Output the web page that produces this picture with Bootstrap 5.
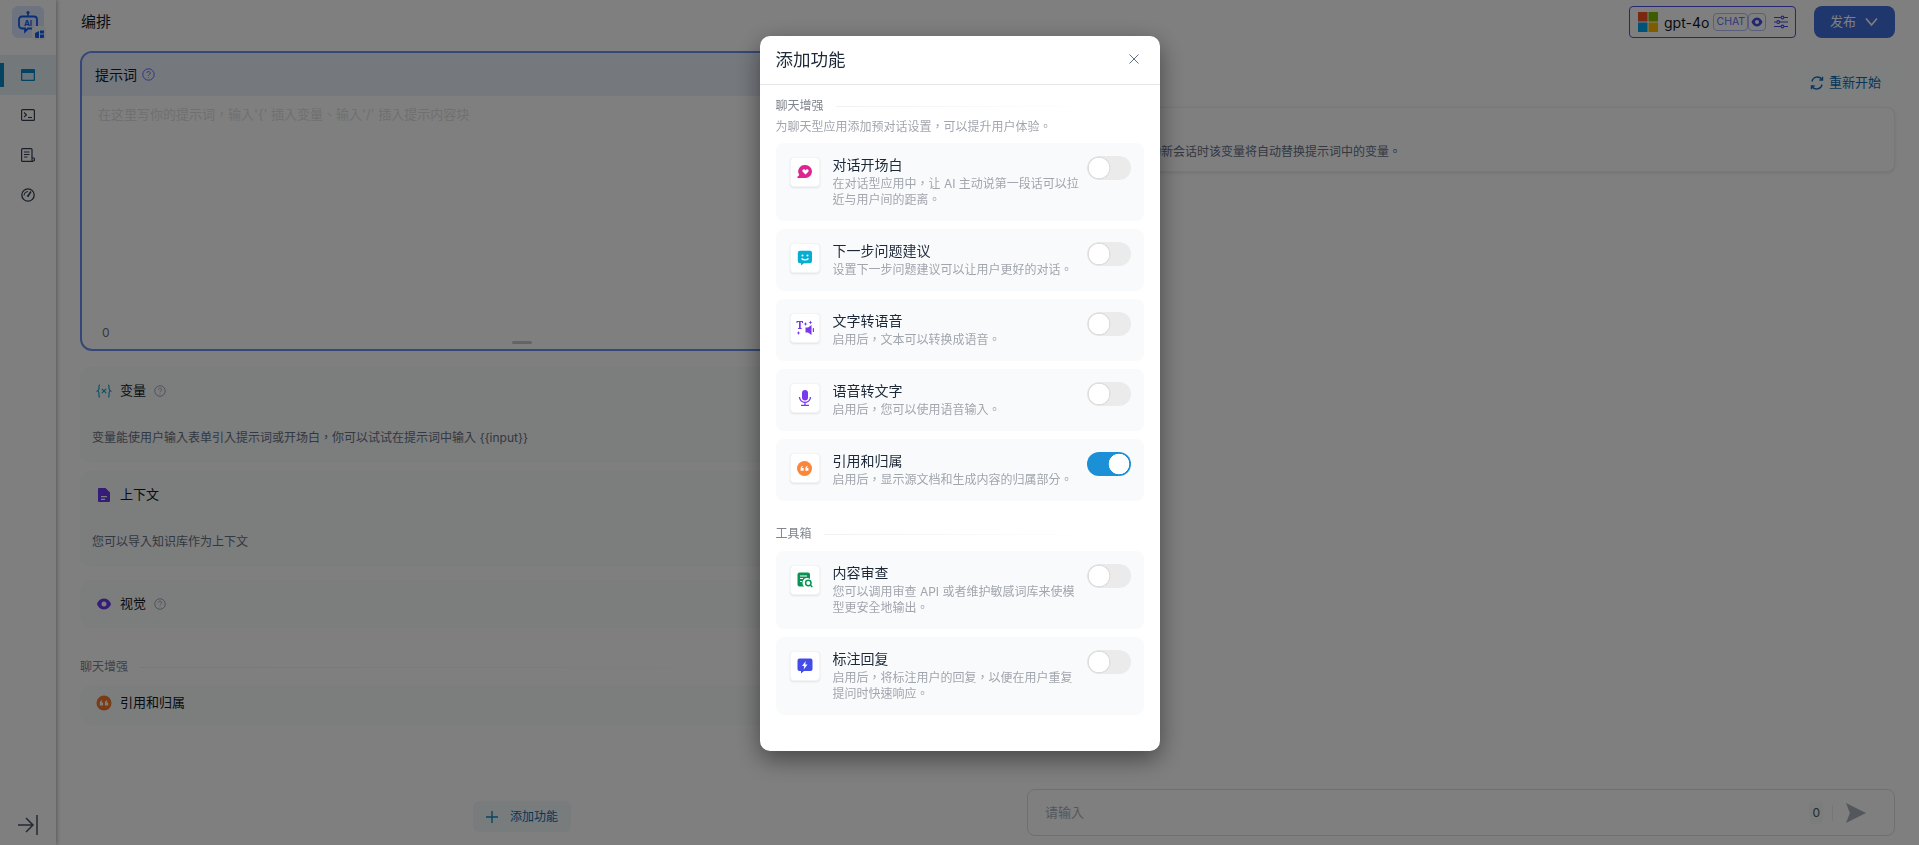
<!DOCTYPE html>
<html lang="zh-TW">
<head>
<meta charset="UTF-8">
<title>编排</title>
<link href="https://cdn.jsdelivr.net/npm/bootstrap@5.3.3/dist/css/bootstrap.min.css" rel="stylesheet">
<style>
html, body { height: 100%; overflow: hidden; }
body { font-family: Inter, "Noto Sans CJK TC", sans-serif; background: #fff; color: #1d2939; font-size: 13px; }
.app-shell { height: 845px; }

/* sidebar */
.side-rail { width: 56px; flex: none; background: #fff; box-shadow: 1px 0 4px rgba(0,0,0,.3); position: relative; z-index: 2; padding-top: 6px; }
.logo-box { width: 32px; height: 32px; margin-left: 12px; background: #dbe6ff; border-radius: 6px; position: relative; display: flex; align-items: center; justify-content: center; }
.logo-tag { position: absolute; right: -2px; bottom: -2px; width: 14px; height: 14px; background: #f2f4f7; border-radius: 3px; display: flex; align-items: center; justify-content: center; }
.rail-nav { margin-top: 17px; }
.rail-item { height: 40px; display: flex; align-items: center; justify-content: center; position: relative; color: #344054; }
.rail-item.is-on { background: #e6f1f6; color: #0b86c6; }
.rail-item.is-on::before { content: ""; position: absolute; left: 0; top: 8px; width: 4px; height: 24px; background: #0b86c6; }
.rail-foot { margin: auto 0 10px 18px; color: #475467; }

/* header */
.top-bar { height: 50px; flex: none; padding: 6px 24px 0 25px; }
.page-name { font-size: 15px; line-height: 32px; color: #101828; }
.model-pick { width: 167px; height: 32px; border: 1px solid #4c50e6; border-radius: 4px; background: #fff; padding-left: 8px; margin-right: 18px; }
.model-name { font-size: 14px; color: #101828; margin: 0 4px 0 6px; }
.chat-tag { height: 18px; width: 35px; border: 1px solid #b3bcf5; border-radius: 4px; font-size: 10.5px; color: #6172f3; line-height: 16px; text-align: center; }
.eye-tag { height: 18px; width: 18px; border: 1px solid #b3bcf5; border-radius: 4px; display: flex; align-items: center; justify-content: center; }
.publish-btn { width: 81px; height: 32px; background: #3f6fd8; border: 0; border-radius: 8px; color: #fff; font-size: 13px; padding: 0; }

/* left column */
.edit-pane { width: 934px; flex: none; padding: 1px 26px 13px 24px; }
.prompt-box { height: 300px; border: 2px solid #6a8ff0; border-radius: 12px; background: #fff; margin-bottom: 16px; }
.prompt-head { height: 43px; background: #eaf0fb; padding-left: 13px; font-size: 14px; color: #101828; border-radius: 10px 10px 0 0; }
.prompt-tip { color: #e0e0e0; font-size: 13px; padding: 9px 16px; }
.prompt-count { color: #667085; font-size: 12px; padding: 0 0 7px 20px; margin-top: auto; }
.drag-bar { position: absolute; left: 50%; bottom: 5px; width: 20px; height: 3px; margin-left: -10px; border-radius: 2px; background: #c8c8c8; }
.block-card { background: #f8fafb; border-radius: 12px; }
.block-head { font-size: 13px; color: #101828; gap: 8px; height: 48px; padding-left: 16px; }
.block-text { font-size: 12px; color: #667085; padding: 0 12px; }
.help-dot { width: 12px; height: 12px; margin-left: 0; }
.group-label { font-size: 12px; color: #80858e; gap: 12px; line-height: 16px; }
.group-line { flex: 1; height: 1px; background: linear-gradient(90deg, #f0f1f3, rgba(240,241,243,0) 85%); }
.add-feature { width: 98px; height: 31px; background: #f1f8fa; color: #0e6bb0; font-size: 12px; border: 0; border-radius: 6px; padding: 0; margin: auto auto 0; gap: 12px; }

/* right column */
.debug-pane { background: #fcfefc; padding: 17px 24px 9px 37px; min-width: 0; }
.debug-name { font-size: 14px; color: #101828; }
.restart-btn { width: 99px; height: 31px; background: #fdfefe; border: 0; border-radius: 8px; color: #0e6bb0; font-size: 13px; padding: 0; gap: 5px; }
.hint-card { height: 65px; margin-top: 9px; background: #fff; border: 1px solid #eef0f2; border-radius: 8px; box-shadow: 0 1px 3px rgba(0,0,0,.1); padding: 0 0 10px 13px; color: #667085; font-size: 12px; }
.ask-box { height: 47px; margin-top: auto; background: #fefefe; border: 1px solid #dcdfe3; border-radius: 8px; padding: 0 28px 0 17px; color: #a8aeb8; font-size: 13px; }
.ask-count { font-size: 12px; color: #475467; background: #f7f8f8; padding: 2px 3px; border-radius: 3px; }
.ask-sep { width: 1px; height: 16px; background: #eaecf0; margin: 0 13px 0 9px; }

/* dialog */
.modal.feature-modal { z-index: 1060; }
.feature-dialog { max-width: 400px; margin: 36px auto 0; }
.feature-dialog .modal-content { border: 0; border-radius: 10px; box-shadow: 0 8px 24px rgba(0,0,0,.45); }
.feature-dialog .modal-header { height: 49px; padding: 0 16px; border-bottom: 1px solid #e5e7eb; }
.feature-title { font-size: 17.5px; color: #1d2939; font-weight: 400; }
.feature-close { line-height: 0; margin: 0 5px 3px 0; }
.feature-dialog .modal-body { padding: 13px 16px 36px; }
.group-text { font-size: 12px; line-height: 16px; color: #a1a5ad; margin: 5px 0 8px; }
.feat-row { background: #f9fafb; border-radius: 8px; padding: 13px 13px 13px 14px; margin-bottom: 8px; }
.feat-pic { width: 30px; height: 30px; flex: none; background: #fff; border: 1px solid #f2f4f7; border-radius: 4px; box-shadow: 0 1px 2px rgba(16,24,40,.1); display: flex; align-items: center; justify-content: center; margin: 1px 13px 0 0; }
.feat-body { width: 250px; flex: none; }
.feat-name { font-size: 14px; line-height: 18px; margin-bottom: 2px; color: #1d2939; }
.feat-desc { font-size: 12px; line-height: 16px; color: #a1a5ad; }
.feat-switch { padding: 0; margin: 0 0 0 auto; min-height: 0; line-height: 0; }
.feat-switch .form-check-input { width: 44px; height: 24px; margin: 0; float: none; border: 0; border-radius: 12px; background-color: #ebebeb; background-position: 0 0; background-size: 100% 100%;
  background-image: radial-gradient(circle at 12px 12px, #fff 10px, rgba(0,0,0,.07) 10.6px, rgba(0,0,0,0) 12px); }
.feat-switch .form-check-input:checked { background-color: #1c90d6; background-position: 0 0;
  background-image: radial-gradient(circle at 32px 12px, #fff 10px, rgba(255,255,255,0) 10.6px); }
</style>
</head>
<body>
<div class="app-shell d-flex">
  <aside class="side-rail d-flex flex-column">
    <div class="logo-box">
      <svg width="22" height="24" viewBox="0 0 22 24" fill="none"><circle cx="11" cy="2.500" r="1.600" fill="#155eef"/><path d="M11 3v3" stroke="#155eef" stroke-width="1.600"/><path d="M5 6.500h12a3 3 0 0 1 3 3v6a3 3 0 0 1-3 3h-6l-3 3v-3H5a3 3 0 0 1-3-3v-6a3 3 0 0 1 3-3z" stroke="#155eef" stroke-width="1.800"/><text x="11" y="15.500" font-size="8" font-weight="700" text-anchor="middle" fill="#155eef" font-family="Inter">AI</text></svg>
      <span class="logo-tag"><svg width="9" height="9" viewBox="0 0 9 9" fill="#155eef"><path d="M0 4l4-2v7H1a1 1 0 0 1-1-1z"/><path d="M5 1.500h4v3H5z"/><path d="M5 5.500h4V8a1 1 0 0 1-1 1H5z"/></svg></span>
    </div>
    <nav class="rail-nav">
      <div class="rail-item is-on"><svg width="14" height="12" viewBox="0 0 14 12"><path fill="currentColor" fill-rule="evenodd" d="M1 0h12a1 1 0 0 1 1 1v10a1 1 0 0 1-1 1H1a1 1 0 0 1-1-1V1a1 1 0 0 1 1-1zm.5 4v6.500h11V4z"/><rect x="1.500" y="4" width="11" height="6.500" fill="#cfe8f6"/></svg></div>
      <div class="rail-item"><svg width="14" height="12" viewBox="0 0 14 12" fill="none" stroke="currentColor"><rect x=".6" y=".6" width="12.800" height="10.800" rx="1" stroke-width="1.200"/><path d="M3 3.500L5.500 6 3 8" stroke-width="1.100"/><path d="M7 8.500h4" stroke-width="1.100"/></svg></div>
      <div class="rail-item"><svg width="14" height="14" viewBox="0 0 14 14" fill="none" stroke="currentColor" stroke-width="1.200"><path d="M11 10V1.500A.9.900 0 0 0 10 .6H1.500a.9.900 0 0 0-.9.900v11a.9.900 0 0 0 .9.900H12"/><path d="M3 4h5.500M3 6.500h5.500M3 9h3.500"/><rect x="11" y="10" width="2.400" height="3" rx=".8"/></svg></div>
      <div class="rail-item"><svg width="14" height="14" viewBox="0 0 14 14" fill="none" stroke="currentColor" stroke-width="1.300"><circle cx="7" cy="7" r="6.200"/><path d="M7 8l3-4.500" stroke-width="1.500"/><path d="M3 7.500A4 4 0 0 1 7 3.500" stroke-width="1"/><circle cx="7" cy="8" r="1" fill="currentColor" stroke="none"/></svg></div>
    </nav>
    <div class="rail-foot"><svg width="20" height="20" viewBox="0 0 20 20" fill="none" stroke="currentColor" stroke-width="1.500"><path d="M0 10h15M8 3l7 7-7 7"/><path d="M19 0v20"/></svg></div>
  </aside>

  <div class="flex-grow-1 d-flex flex-column" style="min-width:0">
    <header class="top-bar d-flex align-items-start">
      <div class="page-name">编排</div>
      <div class="model-pick d-flex align-items-center ms-auto">
        <svg width="20" height="20" viewBox="0 0 20 20"><rect width="9.500" height="9.500" fill="#f25022"/><rect x="10.500" width="9.500" height="9.500" fill="#7fba00"/><rect y="10.500" width="9.500" height="9.500" fill="#00a4ef"/><rect x="10.500" y="10.500" width="9.500" height="9.500" fill="#ffb900"/></svg>
        <span class="model-name">gpt-4o</span>
        <span class="chat-tag">CHAT</span>
        <span class="eye-tag"><svg width="12" height="12" viewBox="0 0 12 12"><path fill="#444ce7" fill-rule="evenodd" d="M6 1.500c3 0 5 3 5.500 4.500C11 7.500 9 10.500 6 10.500S1 7.500.5 6C1 4.500 3 1.500 6 1.500zM6 4a2 2 0 1 0 0 4 2 2 0 0 0 0-4z"/></svg></span>
        <svg class="ms-2" width="14" height="14" viewBox="0 0 14 14" fill="none" stroke="#444ce7" stroke-width="1.100"><path d="M0 2.500h7M10 2.500h4M0 7h2.500M6 7h8M0 11.500h7M10 11.500h4"/><circle cx="8.500" cy="2.500" r="1.400"/><circle cx="4.200" cy="7" r="1.400"/><circle cx="8.500" cy="11.500" r="1.400"/></svg>
      </div>
      <button class="btn publish-btn d-flex align-items-center justify-content-center gap-2" type="button">发布
        <svg width="15" height="10" viewBox="0 0 15 10" fill="none" stroke="#fff" stroke-width="1.600"><path d="M2 1.500l5.500 6.500 5.500-6.500"/></svg>
      </button>
    </header>

    <main class="flex-grow-1 d-flex" style="min-height:0">
      <section class="edit-pane d-flex flex-column">
        <div class="prompt-box d-flex flex-column position-relative">
          <div class="prompt-head d-flex align-items-center" style="gap:5px">提示词
            <svg width="13" height="13" viewBox="0 0 13 13" fill="none" stroke="#6172f3"><circle cx="6.500" cy="6.500" r="5.700"/><path d="M4.800 5a1.700 1.700 0 1 1 2.500 1.600c-.5.300-.8.600-.8 1.200M6.500 9.300v.7"/></svg>
          </div>
          <div class="prompt-tip">在这里写你的提示词，输入'{' 插入变量、输入'/' 插入提示内容块</div>
          <div class="prompt-count">0</div>
          <span class="drag-bar"></span>
        </div>

        <div class="block-card" style="height:96px">
          <div class="block-head d-flex align-items-center">
            <svg width="16" height="16" viewBox="0 0 16 16" fill="none" stroke="#0e9ec9" stroke-width="1.100"><path d="M4 2C2.800 2 3 3 3 5s-1.500 3-1.500 3S3 8 3 11s-.2 3 1 3M12 2c1.200 0 1 1 1 3s1.500 3 1.500 3S13 8 13 11s.2 3-1 3"/><path d="M5.800 5.800l4.400 4.400M10.200 5.800l-4.400 4.400"/></svg>
            变量
            <svg class="help-dot" viewBox="0 0 13 13" fill="none" stroke="#98a2b3"><circle cx="6.500" cy="6.500" r="5.700"/><path d="M4.800 5a1.700 1.700 0 1 1 2.500 1.600c-.5.300-.8.600-.8 1.200M6.500 9.300v.7"/></svg>
          </div>
          <div class="block-text" style="margin-top:14px">变量能使用户输入表单引入提示词或开场白，你可以试试在提示词中输入 {{input}}</div>
        </div>

        <div class="block-card" style="height:96px;margin-top:8px">
          <div class="block-head d-flex align-items-center">
            <svg width="16" height="16" viewBox="0 0 16 16"><path fill="#6938ef" fill-rule="evenodd" d="M3 1h6.500L14 5.500V14a1 1 0 0 1-1 1H3a1 1 0 0 1-1-1V2a1 1 0 0 1 1-1zm2 8v1.200h6V9zm0 2.800V13h4v-1.200z"/></svg>
            上下文
          </div>
          <div class="block-text" style="margin-top:14px">您可以导入知识库作为上下文</div>
        </div>

        <div class="block-card" style="height:48px;margin-top:13px">
          <div class="block-head d-flex align-items-center">
            <svg width="16" height="16" viewBox="0 0 16 16"><path fill="#6938ef" fill-rule="evenodd" d="M8 2.500c4 0 6.500 3.500 7 5.500-.5 2-3 5.500-7 5.500S1.500 10 1 8c.5-2 3-5.500 7-5.500zM8 5.500a2.500 2.500 0 1 0 0 5 2.500 2.500 0 0 0 0-5z"/></svg>
            视觉
            <svg class="help-dot" viewBox="0 0 13 13" fill="none" stroke="#98a2b3"><circle cx="6.500" cy="6.500" r="5.700"/><path d="M4.800 5a1.700 1.700 0 1 1 2.500 1.600c-.5.300-.8.600-.8 1.200M6.500 9.300v.7"/></svg>
          </div>
        </div>

        <div class="group-label d-flex align-items-center" style="margin-top:31px;margin-bottom:10px">聊天增强<span class="group-line"></span></div>

        <div class="block-card" style="height:40px">
          <div class="block-head d-flex align-items-center" style="height:36px">
            <svg width="16" height="16" viewBox="0 0 16 16"><circle cx="8" cy="8" r="7.500" fill="#f4762a"/><path fill="#fff" d="M3.800 10.500V8.300c0-1.700.8-2.700 2.300-3v1.200c-.6.200-.8.500-.8 1h1.800v3zM8.900 10.500V8.300c0-1.700.8-2.700 2.300-3v1.200c-.6.200-.8.500-.8 1h1.800v3z"/></svg>
            引用和归属
          </div>
        </div>

        <button class="btn add-feature d-flex align-items-center justify-content-center" type="button">
          <svg width="12" height="12" viewBox="0 0 12 12" fill="none" stroke="#0e8ac8" stroke-width="1.400"><path d="M6 0v12M0 6h12"/></svg>添加功能
        </button>
      </section>

      <section class="debug-pane flex-grow-1 d-flex flex-column">
        <div class="d-flex align-items-center justify-content-between">
          <div class="debug-name">调试与预览</div>
          <button class="btn restart-btn d-flex align-items-center justify-content-center" type="button">
            <svg width="14" height="14" viewBox="0 0 14 14" fill="none" stroke="#1769c4" stroke-width="1.400"><path d="M12 3.500A5.500 5.500 0 0 0 2 5.500M2 10.500a5.500 5.500 0 0 0 10-2"/><path d="M12.500 .8v3.200H9.300M1.500 13.200V10h3.200"/></svg>
            重新开始
          </button>
        </div>
        <div class="hint-card d-flex align-items-end">填入变量值，每次启动新会话时该变量将自动替换提示词中的变量。</div>
        <div class="ask-box d-flex align-items-center">
          <span>请输入</span>
          <span class="ask-count ms-auto">0</span>
          <span class="ask-sep"></span>
          <svg width="20" height="20" viewBox="0 0 18 18"><path fill="#a8aeb8" d="M0 0l18 9-18 9 3.500-9L0 0z"/></svg>
        </div>
      </section>
    </main>
  </div>
</div>

<div class="modal-backdrop show"></div>
<div class="modal feature-modal d-block" tabindex="-1">
  <div class="modal-dialog feature-dialog">
    <div class="modal-content">
      <div class="modal-header">
        <div class="feature-title">添加功能</div>
        <span class="feature-close ms-auto"><svg width="10" height="10" viewBox="0 0 10 10" fill="none" stroke="#667085"><path d="M.5 .5l9 9M9.500 .5l-9 9"/></svg></span>
      </div>
      <div class="modal-body">
        <div class="group-label d-flex align-items-center">聊天增强<span class="group-line"></span></div>
        <div class="group-text">为聊天型应用添加预对话设置，可以提升用户体验。</div>

        <div class="feat-row d-flex">
          <div class="feat-pic"><svg width="16" height="16" viewBox="0 0 16 16"><path fill="#dd2590" d="M8.500 1a6.500 6.500 0 0 1 0 13H1c-.7 0-1-.8-.5-1.200L2.300 11A6.500 6.500 0 0 1 8.500 1z"/><path fill="#fff" d="M8.500 10.500L5.700 7.700c-1.200-1.500.9-3.400 2.300-2l.5.500.5-.5c1.400-1.400 3.500.5 2.300 2z"/></svg></div>
          <div class="feat-body"><div class="feat-name">对话开场白</div><div class="feat-desc">在对话型应用中，让 AI 主动说第一段话可以拉近与用户间的距离。</div></div>
          <div class="form-check form-switch feat-switch"><input class="form-check-input" type="checkbox"></div>
        </div>

        <div class="feat-row d-flex">
          <div class="feat-pic"><svg width="16" height="16" viewBox="0 0 16 16"><path fill="#06aed4" d="M3 .8h10.500A2.200 2.200 0 0 1 15 3v8a2.200 2.200 0 0 1-2.200 2.200H6.800L4 15.500v-2.300H3A2.200 2.200 0 0 1 .8 11V3A2.200 2.200 0 0 1 3 .8z"/><circle cx="5.500" cy="5.500" r="1" fill="#fff"/><circle cx="10.500" cy="5.500" r="1" fill="#fff"/><path d="M4.500 8.500c1.500 1.800 5.500 1.800 7 0" fill="none" stroke="#fff" stroke-width="1.200"/></svg></div>
          <div class="feat-body"><div class="feat-name">下一步问题建议</div><div class="feat-desc">设置下一步问题建议可以让用户更好的对话。</div></div>
          <div class="form-check form-switch feat-switch"><input class="form-check-input" type="checkbox"></div>
        </div>

        <div class="feat-row d-flex">
          <div class="feat-pic"><svg width="18" height="16" viewBox="0 0 18 16" fill="#7839ee"><path d="M.5 1h6.500v2H6V2H4.700v6h1v1H2v-1h1V2H1.500v1h-1z"/><path d="M9.500 2l.6 1.400L11.500 4l-1.400.6L9.500 6l-.6-1.400L7.500 4l1.400-.6zM14.500 .5l.6 1.400 1.400.6-1.400.6-.6 1.400-.6-1.400-1.400-.6 1.400-.6zM2.500 11l.6 1.400 1.400.6-1.400.6-.6 1.400-.6-1.400L.5 13l1.400-.6z"/><path d="M15.500 5v10l-3.500-2.500H9.500v-5H12z"/><path d="M16.800 8a2 2 0 0 1 0 4z"/></svg></div>
          <div class="feat-body"><div class="feat-name">文字转语音</div><div class="feat-desc">启用后，文本可以转换成语音。</div></div>
          <div class="form-check form-switch feat-switch"><input class="form-check-input" type="checkbox"></div>
        </div>

        <div class="feat-row d-flex">
          <div class="feat-pic"><svg width="14" height="16" viewBox="0 0 14 16"><rect x="4" y="0" width="6" height="10.500" rx="3" fill="#7839ee"/><path d="M1.500 7a5.500 5.500 0 0 0 11 0M7 12.500v2.500M3 15.300h8" fill="none" stroke="#7839ee" stroke-width="1.300"/></svg></div>
          <div class="feat-body"><div class="feat-name">语音转文字</div><div class="feat-desc">启用后，您可以使用语音输入。</div></div>
          <div class="form-check form-switch feat-switch"><input class="form-check-input" type="checkbox"></div>
        </div>

        <div class="feat-row d-flex">
          <div class="feat-pic"><svg width="15" height="15" viewBox="0 0 16 16"><circle cx="8" cy="8" r="8" fill="#fd853a"/><path fill="#fff" d="M3.800 10.500V8.300c0-1.700.8-2.700 2.300-3v1.200c-.6.200-.8.500-.8 1h1.800v3zM8.900 10.500V8.300c0-1.700.8-2.700 2.300-3v1.200c-.6.200-.8.500-.8 1h1.800v3z"/></svg></div>
          <div class="feat-body"><div class="feat-name">引用和归属</div><div class="feat-desc">启用后，显示源文档和生成内容的归属部分。</div></div>
          <div class="form-check form-switch feat-switch"><input class="form-check-input" type="checkbox" checked></div>
        </div>

        <div class="group-label d-flex align-items-center" style="margin:25px 0 9px">工具箱<span class="group-line"></span></div>

        <div class="feat-row d-flex">
          <div class="feat-pic"><svg width="16" height="16" viewBox="0 0 16 16"><path fill="#079455" d="M2.500 .5h8.500a2 2 0 0 1 2 2V7a4.500 4.500 0 0 0-5.700 7.500H2.500a2 2 0 0 1-2-2v-10a2 2 0 0 1 2-2z"/><path d="M3 4h7M3 6.500h3" stroke="#fff" stroke-width="1.100"/><path d="M3 9.500h2" stroke="#fff" stroke-width="1.100"/><circle cx="11.300" cy="11" r="2.700" fill="none" stroke="#079455" stroke-width="1.500"/><path d="M13.300 13l2 2" stroke="#079455" stroke-width="1.500"/></svg></div>
          <div class="feat-body"><div class="feat-name">内容审查</div><div class="feat-desc">您可以调用审查 API 或者维护敏感词库来使模型更安全地输出。</div></div>
          <div class="form-check form-switch feat-switch"><input class="form-check-input" type="checkbox"></div>
        </div>

        <div class="feat-row d-flex" style="margin-bottom:0">
          <div class="feat-pic"><svg width="16" height="16" viewBox="0 0 16 16"><path fill="#444ce7" d="M2.500 .5h11a2 2 0 0 1 2 2v8.500a2 2 0 0 1-2 2H7L4 15.500v-2.500H2.500a2 2 0 0 1-2-2V2.500a2 2 0 0 1 2-2z"/><path fill="#fff" d="M8.800 3L5 8h2.300l-.6 3.500L10.500 6.500H8.200z"/></svg></div>
          <div class="feat-body"><div class="feat-name">标注回复</div><div class="feat-desc">启用后，将标注用户的回复，以便在用户重复提问时快速响应。</div></div>
          <div class="form-check form-switch feat-switch"><input class="form-check-input" type="checkbox"></div>
        </div>
      </div>
    </div>
  </div>
</div>
<script src="https://cdn.jsdelivr.net/npm/bootstrap@5.3.3/dist/js/bootstrap.bundle.min.js"></script>
</body>
</html>
